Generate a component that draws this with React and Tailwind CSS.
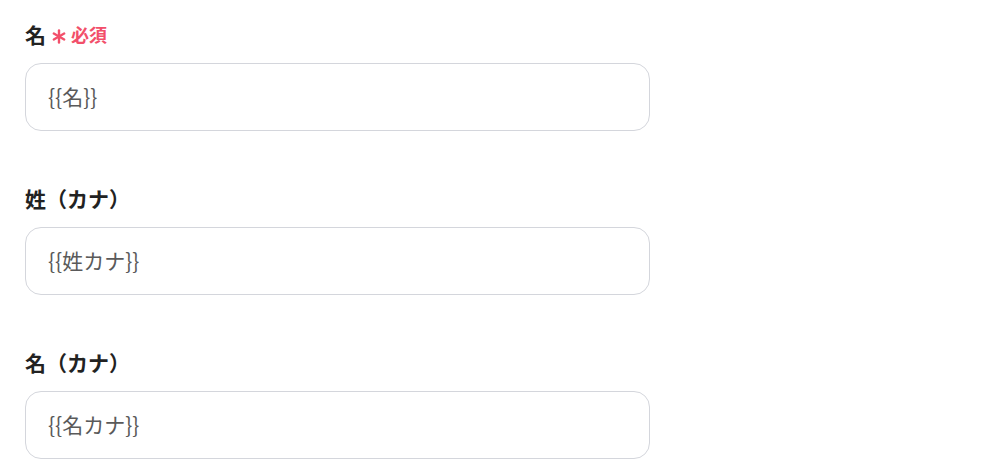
import React from "react";

const fields = [
    {label: "名", value: "{{名}}", required: true},
    {label: "姓（カナ）", value: "{{姓カナ}}"},
    {label: "名（カナ）", value: "{{名カナ}}"},
];

const Asterisk = () => (
    <svg width="14" height="15" viewBox="0 0 14 15" className="ml-[6px] mt-[5px]" stroke="#f24f6a"
         strokeWidth="2.4" strokeLinecap="round">
        <line x1="7" y1="1.5" x2="7" y2="13.5"/>
        <line x1="1.8" y1="4.5" x2="12.2" y2="10.5"/>
        <line x1="1.8" y1="10.5" x2="12.2" y2="4.5"/>
    </svg>
);

export default function App() {
    return (
        <div className="min-h-screen bg-white pl-[25px] pt-[20px]"
             style={{fontFamily: '"Noto Sans CJK JP", "Noto Sans", sans-serif'}}>
            <div className="flex flex-col gap-[53px] w-[625px]">
                {fields.map((f) => (
                    <div key={f.label} className="flex flex-col">
                        <div className="flex items-center h-[28px] mb-[15px]">
                            <span className="text-[21px] font-bold text-[#222] leading-none">{f.label}</span>
                            {f.required && (
                                <>
                                    <Asterisk/>
                                    <span className="ml-[5px] text-[18px] font-bold text-[#f24f6a] leading-none">必須</span>
                                </>
                            )}
                        </div>
                        <div className="h-[68px] border border-[#d4d6dc] rounded-[16px] flex items-center px-[22px]">
                            <span className="text-[21px] text-[#5a5a5a]">{f.value}</span>
                        </div>
                    </div>
                ))}
            </div>
        </div>
    );
}
